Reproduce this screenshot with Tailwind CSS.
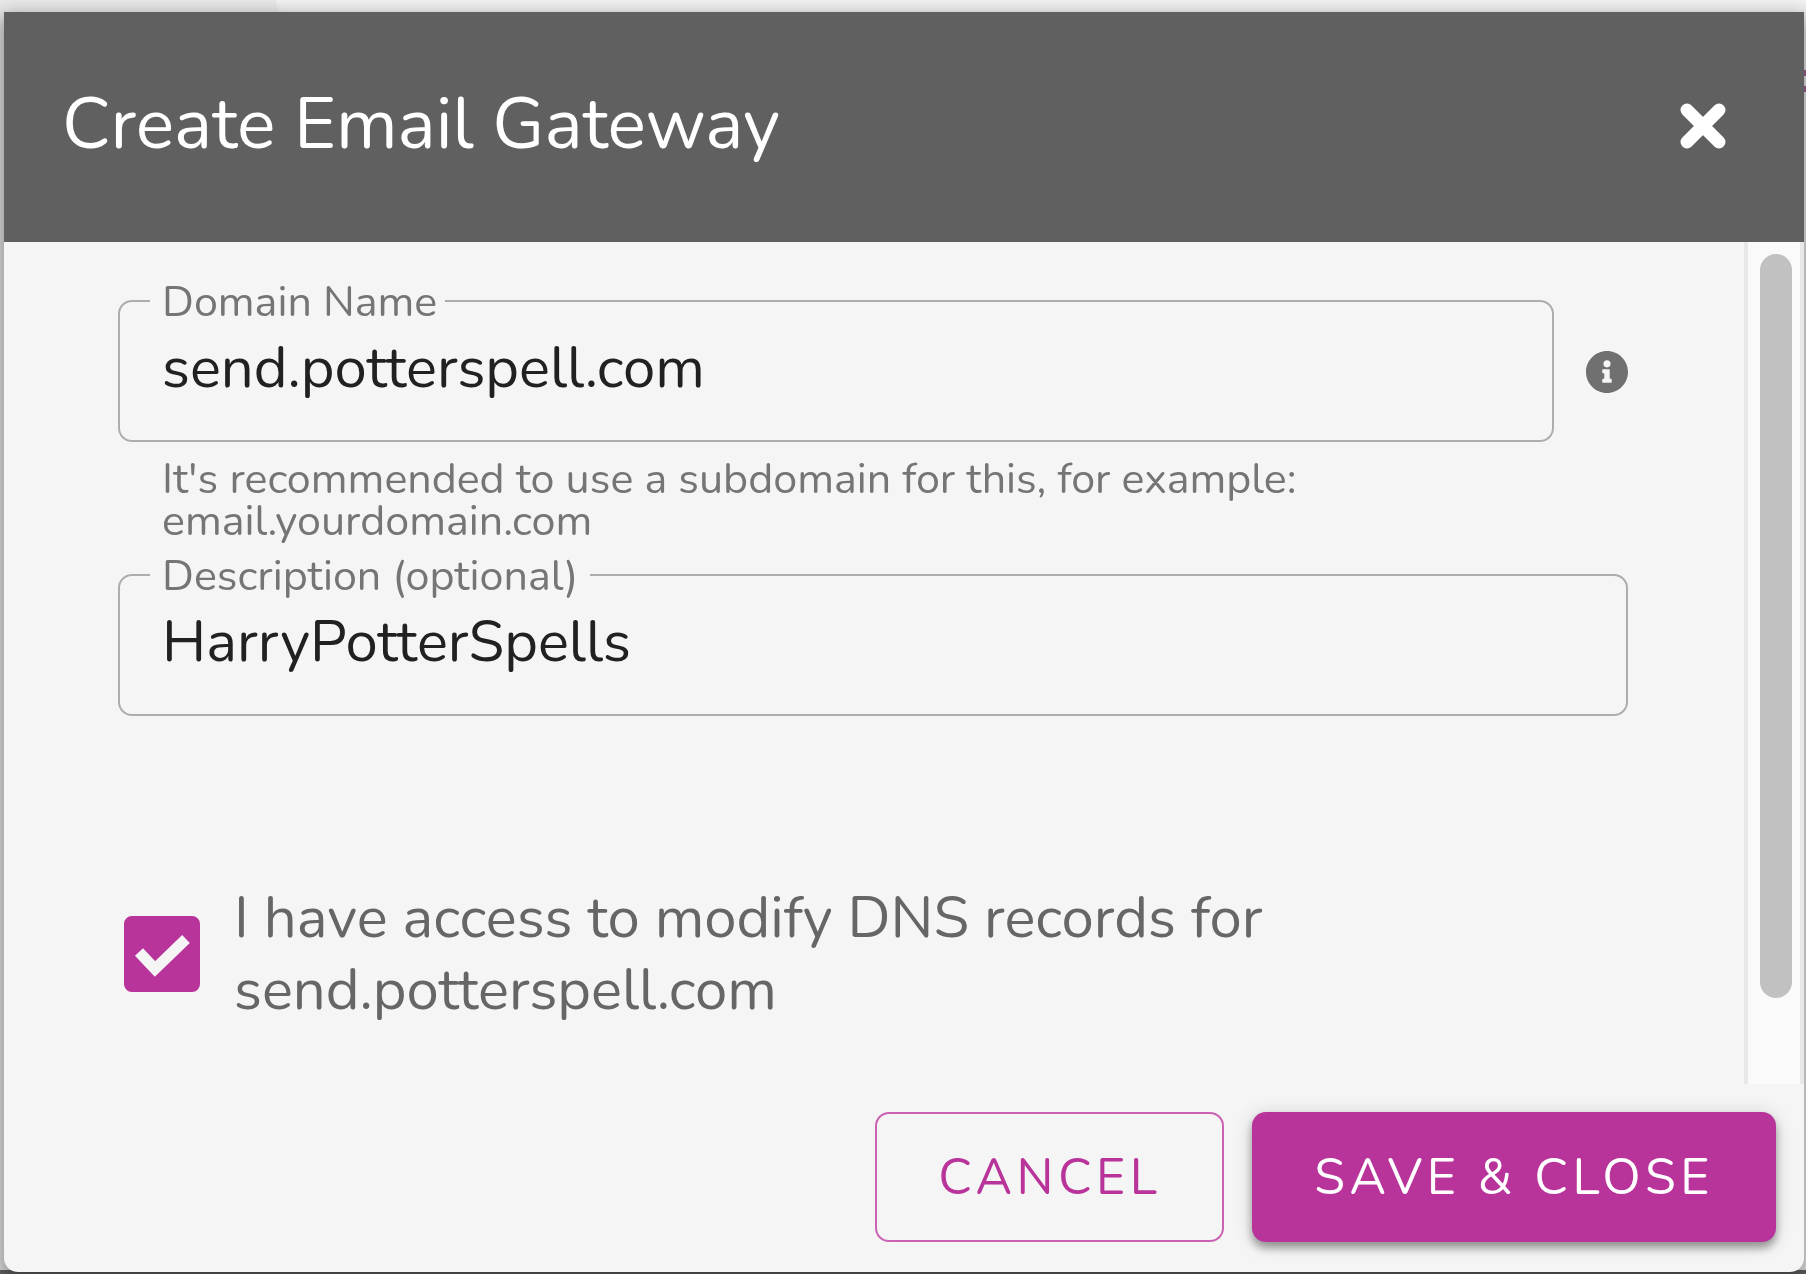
<!DOCTYPE html>
<html lang="en">
<head>
  <meta charset="UTF-8" />
  <meta name="viewport" content="width=device-width, initial-scale=1.0" />
  <title>Create Email Gateway</title>
  <!-- Tailwind CDN -->
  <script src="https://cdn.jsdelivr.net/npm/@tailwindcss/browser@4"></script>
</head>
<body class="min-h-screen flex flex-col bg-[#f3f3f3] font-[Nunito,Lato,sans-serif]">

  <!-- Page behind the dialog -->
  <div class="fixed inset-0 flex flex-col" aria-hidden="true">
    <div class="flex-1 flex">
      <div class="w-[276px] bg-[#eaeaea] shadow-md"></div>
      <div class="flex-1"></div>
    </div>
    <div class="h-1 bg-[#666]"></div>
    <div class="absolute right-0 top-[70px] h-[22px] w-1 border-y-6 border-[#a9669a]"></div>
  </div>

  <!-- Dialog -->
  <div role="dialog" aria-labelledby="dialog-title" class="relative flex-1 flex flex-col mt-3 ml-1 mr-[2px] mb-[2px] rounded-b-[14px] bg-[#f5f5f5] shadow-[0_8px_20px_4px_rgba(0,0,0,0.4)]">

    <header class="flex items-center justify-between h-[230px] pl-[58px] pr-[74px] pb-[2px] bg-[#606060] text-white">
      <h1 id="dialog-title" class="pb-1 text-[72px] leading-[90px]">Create Email Gateway</h1>
      <button type="button" aria-label="Close" class="p-1">
        <svg class="size-[46px]" viewBox="0 0 46 46" fill="none" stroke="currentColor" stroke-width="13" stroke-linecap="round">
          <path d="M7 7L39 39M39 7L7 39" />
        </svg>
      </button>
    </header>

    <form class="flex-1 flex flex-col">
      <div class="flex">
        <!-- Fields -->
        <div class="flex-1 h-[842px] pt-9 pl-[114px] pr-[116px]">
          <div class="flex items-center gap-8">
            <fieldset class="flex-1 h-[164px] px-[30px] border-2 border-[#adadad] rounded-[14px]">
              <legend class="pl-3 pr-2 pt-[3px] pb-px text-[43px] leading-[42px] text-[#757575]"><label for="domain">Domain Name</label></legend>
              <input id="domain" type="text" value="send.potterspell.com" aria-describedby="domain-help" class="block w-full px-3 pt-2 text-[58px] leading-[72px] text-[#212121] outline-none" />
            </fieldset>
            <button type="button" aria-label="About domain names" class="mt-6 text-[#707070]">
              <svg class="size-[42px]" viewBox="8 8 496 496" fill="currentColor">
                <path d="M256 8C119 8 8 119 8 256s111 248 248 248 248-111 248-248S393 8 256 8zm0 110a42 42 0 110 84 42 42 0 010-84zm56 254c0 7-5 12-12 12h-88c-7 0-12-5-12-12v-24c0-7 5-12 12-12h12v-64h-12c-7 0-12-5-12-12v-24c0-7 5-12 12-12h64c7 0 12 5 12 12v100h12c7 0 12 5 12 12z" />
              </svg>
            </button>
          </div>
          <p id="domain-help" class="mt-4 pl-11 text-[43px] leading-[42px] text-[#757575]">It's recommended to use a subdomain for this, for example:<br />email.yourdomain.com</p>

          <fieldset class="mt-[10px] h-[164px] px-[30px] border-2 border-[#adadad] rounded-[14px]">
            <legend class="px-3 pt-[3px] pb-px text-[43px] leading-[42px] text-[#757575]"><label for="description">Description (optional)</label></legend>
            <input id="description" type="text" value="HarryPotterSpells" class="block w-full px-3 pt-2 text-[58px] leading-[72px] text-[#212121] outline-none" />
          </fieldset>

          <!-- DNS confirmation -->
          <div class="mt-[166px] flex items-center gap-[34px] pl-[6px]">
            <span class="relative size-[76px] shrink-0">
              <input id="dns" type="checkbox" checked class="peer block size-[76px] appearance-none rounded-[8px] border-4 border-[#b8339a] checked:bg-[#b8339a]" />
              <svg class="absolute inset-0 size-[76px] pointer-events-none hidden peer-checked:block" viewBox="0 0 76 76" fill="none" stroke="#f5f5f5" stroke-width="11">
                <path stroke-linejoin="miter" d="M15 36L31 53L62 23" />
              </svg>
            </span>
            <label for="dns" class="text-[58px] leading-[72px] text-[#666]">I have access to modify DNS records for<br />send.potterspell.com</label>
          </div>
        </div>

        <!-- Scrollbar -->
        <div class="w-[60px] pt-3 pl-3 border-l-4 border-r-4 border-[#e8e8e8] bg-[#fafafa]" aria-hidden="true">
          <div class="h-[744px] w-8 rounded-full bg-[#c1c1c1]"></div>
        </div>
      </div>

      <div class="flex-1 flex items-center justify-end gap-7 pr-7 pb-[2px]">
        <button type="button" class="h-[130px] px-[61px] pt-[2px] rounded-[14px] border-2 border-[#cb62b3] text-[50px] leading-[60px] tracking-[0.09em] text-[#b8339a]">CANCEL</button>
        <button type="submit" class="h-[130px] px-[62px] pt-[2px] rounded-[14px] bg-[#b8339a] text-[50px] leading-[60px] tracking-[0.09em] text-white shadow-[0_6px_8px_rgba(0,0,0,0.35),0_2px_20px_rgba(0,0,0,0.15)]">SAVE &amp; CLOSE</button>
      </div>
    </form>
  </div>

</body>
</html>
